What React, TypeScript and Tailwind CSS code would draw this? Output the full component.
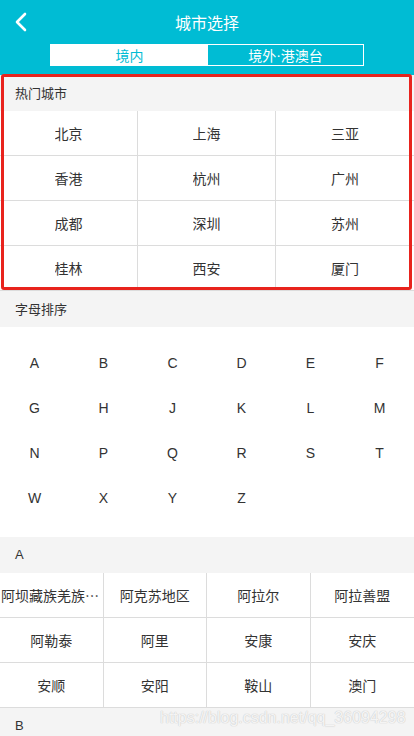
import React from 'react';

const hotCities = ['北京', '上海', '三亚', '香港', '杭州', '广州', '成都', '深圳', '苏州', '桂林', '西安', '厦门'];
const letters = 'ABCDEFGHJKLMNPQRSTWXYZ'.split('');
const aCities = ['阿坝藏族羌族自治州', '阿克苏地区', '阿拉尔', '阿拉善盟', '阿勒泰', '阿里', '安康', '安庆', '安顺', '安阳', '鞍山', '澳门'];
const bCities = ['北京', '保定', '包头', '蚌埠', '宝鸡', '北海', '本溪', '滨州'];

const cnFont = { fontFamily: '"Noto Sans CJK SC", "Liberation Sans", sans-serif' };
const latin = { fontFamily: '"Liberation Sans", Arial, sans-serif' };

function SectionTitle({ children }: { children: React.ReactNode }) {
  return (
    <div className="h-[36px] bg-[#f4f4f4] flex items-center pl-[15px] text-[13px] text-[#333]">
      {children}
    </div>
  );
}

function CityGrid({ cities, cols }: { cities: string[]; cols: 3 | 4 }) {
  return (
    <div className={cols === 3 ? 'grid grid-cols-3 bg-white' : 'grid grid-cols-4 bg-white'}>
      {cities.map((c, i) => (
        <div
          key={c + i}
          className={
            'h-[45px] flex items-center justify-center px-[1px] text-[14px] text-[#333] border-b border-[#dcdcdc] ' +
            ((i + 1) % cols === 0 ? '' : 'border-r')
          }
        >
          <span className="truncate">{c}</span>
        </div>
      ))}
    </div>
  );
}

export default function App() {
  return (
    <div className="relative w-[414px] min-h-screen bg-[#f4f4f4]" style={cnFont}>
      {/* Header */}
      <header className="h-[75px] bg-[#00bcd4] flex flex-col items-center">
        <div className="relative w-full h-[44px] flex items-center justify-center">
          <svg className="absolute left-[13px] top-[12px]" width="16" height="20" viewBox="0 0 16 20" fill="none">
            <path d="M12 2L4 10L12 18" stroke="white" strokeWidth="2.6" strokeLinecap="round" strokeLinejoin="round" />
          </svg>
          <h1 className="text-[16px] text-white">城市选择</h1>
        </div>
        <div className="flex w-[314px] h-[22px] border border-white text-[14px]">
          <div className="w-[157px] bg-white text-[#00bcd4] flex items-center justify-center">境内</div>
          <div className="flex-1 text-white flex items-center justify-center">
            境外<span style={latin}>·</span>港澳台
          </div>
        </div>
      </header>

      {/* Hot cities */}
      <SectionTitle>热门城市</SectionTitle>
      <CityGrid cities={hotCities} cols={3} />

      {/* Letters */}
      <SectionTitle>字母排序</SectionTitle>
      <div className="grid grid-cols-6 bg-white pt-[14px] pb-[16px] text-[14px] text-[#333]" style={latin}>
        {letters.map((l) => (
          <div key={l} className="h-[45px] flex items-center justify-center">
            {l}
          </div>
        ))}
      </div>

      <SectionTitle>
        <span style={latin}>A</span>
      </SectionTitle>
      <CityGrid cities={aCities} cols={4} />

      <SectionTitle>
        <span style={latin}>B</span>
      </SectionTitle>
      <CityGrid cities={bCities} cols={4} />

      {/* Annotation box */}
      <div className="absolute left-[1px] top-[74px] w-[411px] h-[216px] border-[3px] border-[#e8231d] rounded-[3px] pointer-events-none" />

      {/* Watermark */}
      <div
        className="absolute left-[160px] top-[706px] text-[16px] text-white/80 pointer-events-none"
        style={{ ...latin, textShadow: '0 0 1px #c8c8c8, 0 0 1px #c8c8c8' }}
      >
        https://blog.csdn.net/qq_36094298
      </div>
    </div>
  );
}
